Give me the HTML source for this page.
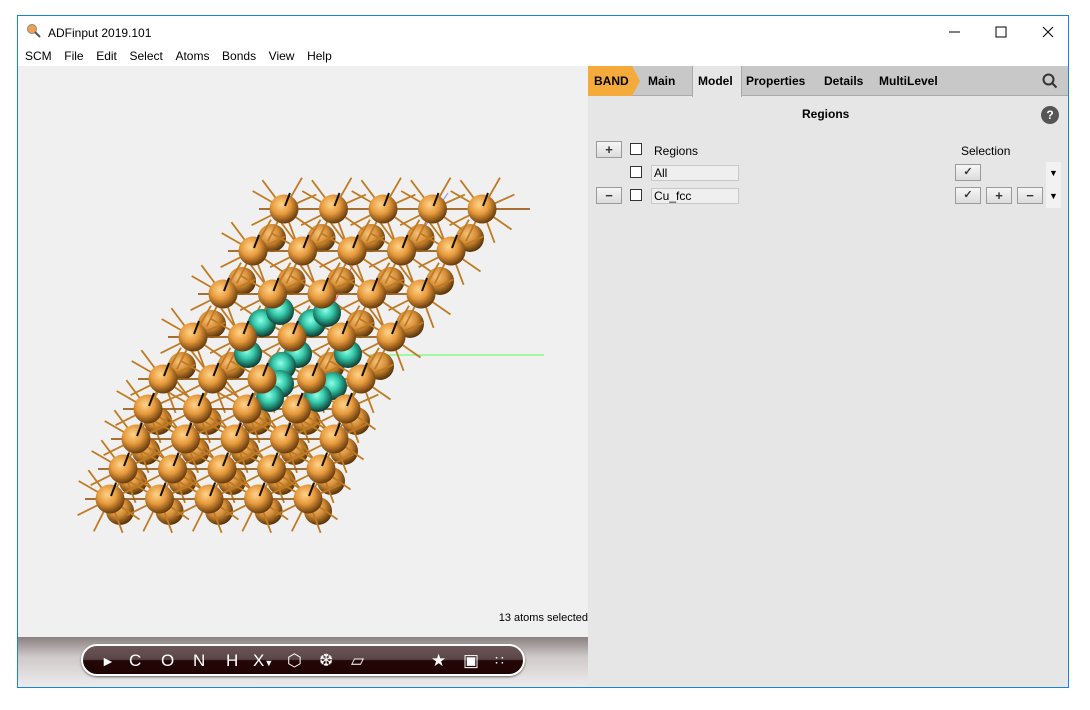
<!DOCTYPE html>
<html><head><meta charset="utf-8"><style>
*{margin:0;padding:0;box-sizing:border-box}
body{width:1090px;height:710px;background:#fff;position:relative;overflow:hidden;font-family:"Liberation Sans",Arial,sans-serif;font-size:12px;color:#000}
.win{position:absolute;left:17px;top:15px;width:1052px;height:673px;border:1px solid #1883d7;background:#fff}
.abs{position:absolute}
.title{left:30px;top:10px;font-size:12px}
.menu{top:33px;left:7px;font-size:12px}
.menu span{margin-right:12.6px}
.view{left:0;top:50px;width:570px;height:571px;background:#f0f0f0}
.right{left:570px;top:50px;width:480px;height:621px;background:#e6e6e6}
.tabs{left:0;top:0;width:480px;height:30px;background:#c8c8c8;border-bottom:1px solid #aaa}
.tab{position:absolute;top:8px;font-weight:bold;font-size:12px}
.btn{position:absolute;width:26px;height:17px;background:linear-gradient(#f6f6f6,#dcdcdc);border:1px solid #9a9a9a;text-align:center;font-size:13px;line-height:15px;font-weight:bold;color:#333}
.cb{position:absolute;width:12px;height:12px;border:1px solid #333;background:#fff}
.fld{position:absolute;height:16px;width:88px;background:#efefef;border:1px solid #c8c8c8;padding-left:2px;line-height:14px;font-size:12px}
.bar{left:0;top:621px;width:570px;height:50px;background:linear-gradient(#8a8080,#d0caca 40%,#ecebeb)}
.pill{left:63px;top:7px;width:444px;height:32px;border-radius:16px;border:2px solid #fff;background:linear-gradient(#6a5656 0%,#5a4646 48%,#250606 52%,#1e0303);color:#fff;font-size:17px;box-shadow:0 1px 2px #666}
.pill span{position:absolute;top:5px}
</style></head><body>
<div class="win">
<svg class="abs" style="left:8px;top:7px" width="16" height="16"><circle cx="6" cy="6" r="4.5" fill="#f0a050" stroke="#888"/><line x1="9" y1="9" x2="14" y2="14" stroke="#555" stroke-width="2"/></svg>
<div class="abs title">ADFinput 2019.101</div>
<svg class="abs" style="left:930px;top:8px" width="120" height="16"><line x1="1" y1="8" x2="12" y2="8" stroke="#000"/><rect x="48" y="3" width="10" height="10" fill="none" stroke="#000"/><path d="M95 3l10 10M105 3l-10 10" stroke="#000"/></svg>
<div class="abs menu"><span>SCM</span><span>File</span><span>Edit</span><span>Select</span><span>Atoms</span><span>Bonds</span><span>View</span><span>Help</span></div>
<div class="abs view">
<svg id="mol" width="570" height="571" style="position:absolute;left:0;top:0">
<defs>
<radialGradient id="cu" cx="40%" cy="35%" r="65%"><stop offset="0" stop-color="#ffd38a"/><stop offset=".5" stop-color="#e79a3c"/><stop offset="1" stop-color="#6a3c0c"/></radialGradient>
<radialGradient id="cub" cx="40%" cy="35%" r="65%"><stop offset="0" stop-color="#f6c27a"/><stop offset=".5" stop-color="#d58e38"/><stop offset="1" stop-color="#5a3408"/></radialGradient>
<radialGradient id="te" cx="45%" cy="40%" r="60%"><stop offset="0" stop-color="#8fffe8"/><stop offset=".45" stop-color="#35c8aa"/><stop offset="1" stop-color="#0c3a30"/></radialGradient>
</defs>
<line x1="395" y1="178" x2="430" y2="127" stroke="#8888ff"/>
<line x1="310" y1="250" x2="345" y2="178" stroke="#ff6060"/>
<line x1="350" y1="289" x2="526" y2="289" stroke="#55ff55"/>
<g id="g"></g>
</svg>
<div class="abs" style="right:0;top:546px;font-size:11px">13 atoms selected</div>
</div>
<div class="abs bar"><div class="abs pill">
<span style="left:18px;font-size:14px;top:7px">&#9658;</span>
<span style="left:46px">C</span><span style="left:78px">O</span><span style="left:110px">N</span><span style="left:143px">H</span><span style="left:170px">X<small style="font-size:9px">&#9660;</small></span>
<span style="left:204px">&#11041;</span><span style="left:236px">&#10054;</span><span style="left:268px">&#9649;</span>
<span style="left:348px">&#9733;</span><span style="left:380px">&#9635;</span><span style="left:412px;font-size:14px;top:6px">&#8759;</span>
</div></div>
<div class="abs right">
<div class="abs tabs">
<div class="abs" style="left:0;top:0;width:52px;height:30px;background:#f5ab3c;clip-path:polygon(0 0,44px 0,52px 15px,44px 30px,0 30px)"></div>
<div class="tab" style="left:6px">BAND</div>
<div class="tab" style="left:60px">Main</div>
<div class="abs" style="left:104px;top:0;width:50px;height:31px;background:#e6e6e6;border-left:1px solid #aaa;border-right:1px solid #aaa"></div>
<div class="tab" style="left:110px">Model</div>
<div class="tab" style="left:158px">Properties</div>
<div class="tab" style="left:236px">Details</div>
<div class="tab" style="left:291px">MultiLevel</div>
<svg class="abs" style="left:454px;top:7px" width="16" height="16"><circle cx="6.5" cy="6.5" r="5" fill="none" stroke="#333" stroke-width="2"/><line x1="10" y1="10" x2="14.5" y2="14.5" stroke="#333" stroke-width="2"/></svg>
</div>
<div class="abs" style="left:214px;top:41px;font-weight:bold">Regions</div>
<div class="abs" style="left:453px;top:40px;width:18px;height:18px;border-radius:9px;background:#555;color:#fff;text-align:center;font-weight:bold;line-height:18px">?</div>
<div class="btn" style="left:8px;top:75px">+</div>
<div class="cb" style="left:42px;top:77px"></div>
<div class="abs" style="left:66px;top:78px">Regions</div>
<div class="abs" style="left:373px;top:78px">Selection</div>
<div class="cb" style="left:42px;top:100px"></div>
<div class="fld" style="left:63px;top:99px">All</div>
<div class="btn" style="left:367px;top:98px;font-size:11px">&#10003;</div>
<div class="btn" style="left:8px;top:121px">&#8722;</div>
<div class="cb" style="left:42px;top:123px"></div>
<div class="fld" style="left:63px;top:122px">Cu_fcc</div>
<div class="btn" style="left:367px;top:121px;font-size:11px">&#10003;</div>
<div class="btn" style="left:398px;top:121px">+</div>
<div class="btn" style="left:429px;top:121px">&#8722;</div>
<div class="abs" style="left:458px;top:96px;width:15px;height:46px;background:#f2f2f2;font-size:9px;text-align:center;line-height:23px">&#9660;<br>&#9660;</div>
</div>
</div>
<script>
var rows=[[208,284],[250,253],[293,223],[336,193],[378,163],[408,148],[438,136],[468,123],[498,110]];
var g=document.getElementById('g'),ox=18,oy=65,s='';
function at(x,y,r,f){return '<circle cx="'+(x-ox)+'" cy="'+(y-oy)+'" r="'+r+'" fill="url(#'+f+')"/>';}
function ln(x1,y1,x2,y2,c,w){return '<line x1="'+(x1-ox)+'" y1="'+(y1-oy)+'" x2="'+(x2-ox)+'" y2="'+(y2-oy)+'" stroke="'+c+'" stroke-width="'+w+'"/>';}
var dirs=[[-0.6,-0.8],[0.5,-0.87],[-0.87,-0.5],[0.82,0.57],[-0.45,0.9],[0.35,0.94],[-0.9,0.45],[0.9,-0.4]];
var back='',bonds='';
rows.forEach(function(r,i){var off=i<5?[19,-13]:[10,12];
 bonds+=ln(r[1]-25,r[0],r[1]+4*49.5+(i==0?48:0),r[0],'#9a5e18',1.8);
 for(var j=0;j<5;j++){var x=r[1]+j*49.5,y=r[0];
  if(i>0)back+=at(x+off[0],y+off[1],14,'cub');
  dirs.forEach(function(d){var L=36;bonds+=ln(x,y,x+d[0]*L,y+d[1]*L,'#c07a22',1.8);});
 }});
s=back+bonds;
var te=[[262,322],[312,322],[280,310],[327,312],[248,353],[298,353],[348,353],[282,365],[280,383],[333,385],[270,397],[318,397]];
te.forEach(function(p){s+=at(p[0],p[1],14,'te');});
rows.forEach(function(r,i){for(var j=0;j<5;j++){var x=r[1]+j*49.5,y=r[0];s+=at(x,y,14.5,'cu');s+=ln(x+1,y-3,x+6,y-16,'#111',2);}});
g.innerHTML=s;
</script>
</body></html>
